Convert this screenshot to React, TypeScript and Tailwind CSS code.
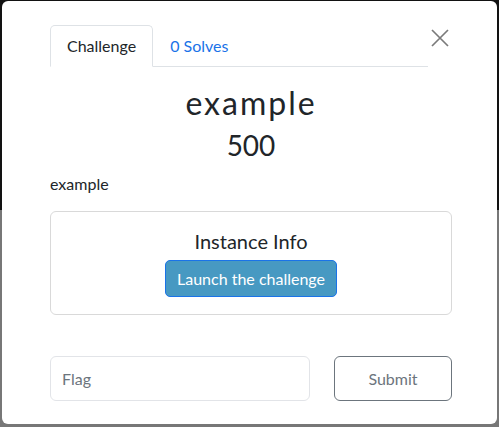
export default function App() {
  return (
    <div className="relative h-[427px] w-[499px] overflow-hidden font-['Lato','Noto_Sans',sans-serif]">
      {/* backdrop */}
      <div className="flex h-full flex-col">
        <div className="h-[210px] bg-[#121212]" />
        <div className="flex-1 bg-[#777777]" />
      </div>

      {/* modal */}
      <div className="absolute left-[2px] top-[1px] h-[423px] w-[495px] rounded-[6px] bg-white pl-[48px] pr-[45px] pt-[24px] text-[#212529]">
        <div className="flex items-start">
          <div className="flex w-[378px] shrink-0 border-b border-[#dee2e6]">
            <div className="-mb-px flex h-[42px] items-center rounded-t-[5px] border border-b-white border-[#dee2e6] bg-white px-[16px] text-[16px]">
              Challenge
            </div>
            <div className="flex h-[41px] items-center px-[17px] text-[16px] text-[#1a73e8]">
              0 Solves
            </div>
          </div>
          <button className="ml-[3px] mt-[4px] text-[#7a7a7a]">
            <svg width="18" height="18" viewBox="0 0 18 18" fill="none" stroke="currentColor" strokeWidth="1.7">
              <path d="M1 1L17 17M17 1L1 17" />
            </svg>
          </button>
        </div>

        <h2 className="mt-[16px] text-center text-[32px] leading-[40px] tracking-[2px]">example</h2>
        <h3 className="mt-[4px] text-center text-[28px] leading-[36px]">500</h3>

        <p className="mt-[11px] text-[16px] leading-[20px]">example</p>

        <div className="mt-[17px] flex h-[104px] flex-col items-center rounded-[6px] border border-[#d9d9d9] pt-[17px]">
          <div className="text-[20px] leading-[24px]">Instance Info</div>
          <button className="mt-[7px] h-[37px] w-[172px] rounded-[5px] border border-[#1a73e8] bg-[#4799c2] text-[16px] text-white">
            Launch the challenge
          </button>
        </div>

        <div className="mt-[41px] flex gap-[24px]">
          <input
            placeholder="Flag"
            className="h-[45px] w-[260px] rounded-[6px] border border-[#e2e4e8] px-[11px] text-[16px] placeholder:text-[#6c757d]"
          />
          <button className="h-[45px] w-[118px] rounded-[6px] border border-[#6c757d] text-[16px] text-[#6c757d]">
            Submit
          </button>
        </div>
      </div>
    </div>
  );
}
